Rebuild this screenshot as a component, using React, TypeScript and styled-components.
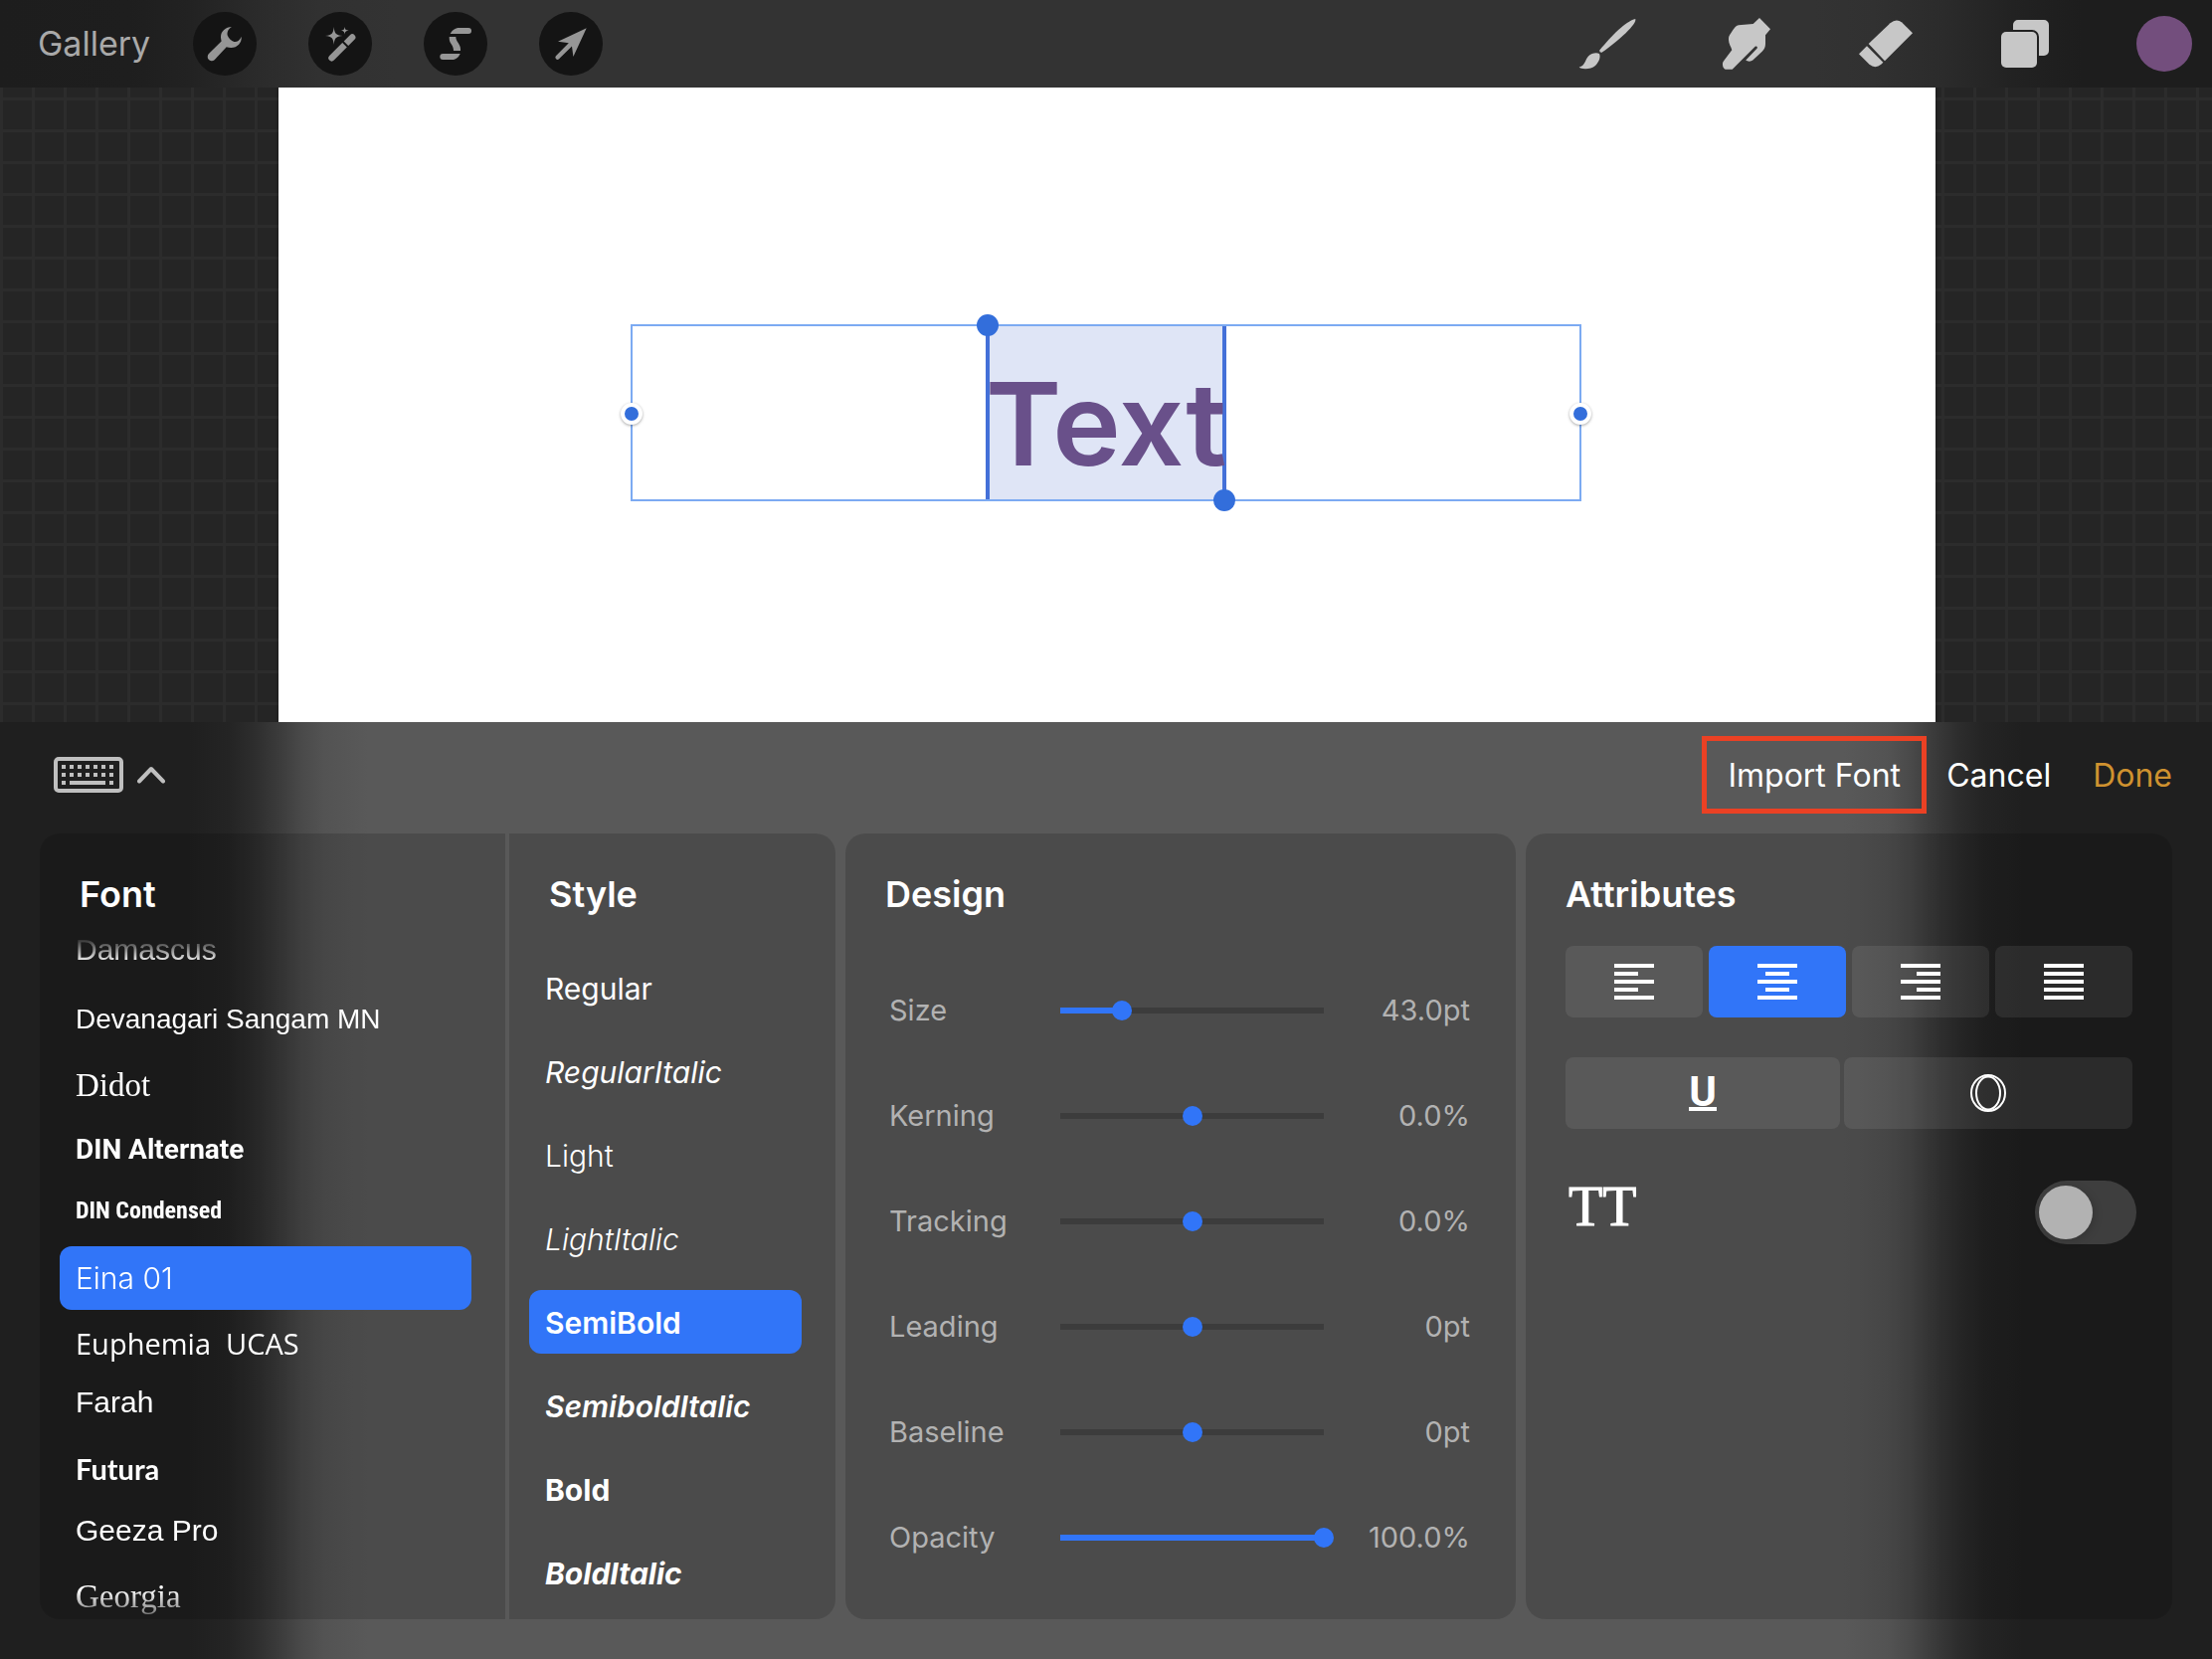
import React, { useState } from "react";
import styled, { createGlobalStyle } from "styled-components";

const ui = `Inter, Roboto, "Liberation Sans", sans-serif`;
const blue = "#3175f8";

const GlobalStyle = createGlobalStyle`
  *, *::before, *::after { box-sizing: border-box; }
  body { margin: 0; background: #1f1f1f; font-family: ${ui}; color: #fff; }
  button { margin: 0; padding: 0; border: 0; background: none; color: inherit; font: inherit; cursor: pointer; }
  ul { margin: 0; padding: 0; list-style: none; }
`;

const Page = styled.div`
  display: flex;
  flex-direction: column;
  min-height: 100vh;
`;

/* ---------- top bar ---------- */

const TopBar = styled.header`
  display: flex;
  align-items: center;
  justify-content: space-between;
  height: 88px;
  padding: 0 18px 0 38px;
  background: linear-gradient(
    90deg,
    #1d1d1d 0, #1e1e1e 130px, #222 190px, #2b2b2b 260px, #313131 320px, #333 400px,
    #333 calc(100% - 400px), #313131 calc(100% - 340px), #2b2b2b calc(100% - 270px),
    #222 calc(100% - 200px), #1d1d1d calc(100% - 130px), #1d1d1d 100%
  );
`;

const ToolGroup = styled.nav<{ $gap: number }>`
  display: flex;
  align-items: center;
  gap: ${(p) => p.$gap}px;
`;

const GalleryButton = styled.button`
  width: 104px;
  font-size: 34px;
  line-height: 44px;
  text-align: left;
  color: #a9a9a9;
`;

const RoundTool = styled.button`
  display: flex;
  width: 64px;
  height: 64px;
  border-radius: 50%;
  background: #141414;
  color: #969696;
`;

const PaintTool = styled.button`
  display: flex;
  justify-content: center;
  width: 60px;
  height: 56px;
  color: #c7c7c7;
`;

const ColorDisc = styled.span`
  width: 56px;
  height: 56px;
  border-radius: 50%;
  background: #734e7d;
`;

const WrenchIcon = () => (
  <svg width="64" height="64" viewBox="0 0 64 64" fill="currentColor" aria-hidden="true">
    <path d="M39 15C33 15 28 19.500 28 25C28 27 28.600 28.600 28.600 29.400L16.200 41.800A4.100 4.100 0 0 0 21.600 48.200L33.700 35.200C42.500 38 49.400 32.500 48.700 24.700C47.200 28.500 44.200 30.600 41.400 30C38.500 29 35.600 26.200 34.700 23.400C34 20.500 35.500 17 39 15Z" />
  </svg>
);

const WandIcon = () => (
  <svg width="64" height="64" viewBox="0 0 64 64" fill="currentColor" aria-hidden="true">
    <path d="M25.700 15C26.300 21.500 27.500 23.300 34.500 24.100C27.500 24.900 26.300 26.500 25.700 33C25.100 26.500 23.900 24.900 17 24.100C23.900 23.300 25.100 21.500 25.700 15Z" />
    <path d="M36.600 14.800C36.900 17.600 37.600 18.400 40.600 18.700C37.600 19 36.900 19.900 36.600 22.700C36.300 19.900 35.600 19 32.600 18.700C35.600 18.400 36.300 17.600 36.600 14.800Z" />
    <path d="M23.500 46.300L44.200 25.500" stroke="currentColor" strokeWidth="6.400" strokeLinecap="round" />
    <path d="M34.500 29.800L40.500 35.800" stroke="#141414" strokeWidth="2" />
  </svg>
);

const SelectIcon = () => (
  <svg width="64" height="64" viewBox="0 0 64 64" fill="currentColor" aria-hidden="true">
    <path d="M26.700 22C28.500 18.500 31.500 16 35.700 16H45A3 3 0 0 1 45 22Z" />
    <path d="M25.700 25H32.300C32.300 30 37 32 37 37.500V39H30C30 33 25.700 32 25.700 26.500Z" />
    <path d="M19.300 42H36.700C35 45.500 32.500 48 28.700 48H19.300A3 3 0 0 1 19.300 42Z" />
  </svg>
);

const ArrowIcon = () => (
  <svg width="64" height="64" viewBox="0 0 64 64" fill="currentColor" aria-hidden="true">
    <path d="M47.700 16.300L34.400 45L33 34.400L20 47.300A2.200 2.200 0 0 1 16.900 44.200L29.800 31.200L19 29.800Z" />
  </svg>
);

const BrushIcon = () => (
  <svg width="60" height="56" viewBox="0 0 60 56" fill="currentColor" aria-hidden="true">
    <path d="M58.300 3C60 8 42 24.500 24.500 36.800Q22 37 22.200 34.600C34 20 49 5 58.300 3Z" />
    <path d="M1.700 51.600C8 50 7.500 44 11 40.500C14 37.500 19 36.600 22 38C23.500 41 22 46 18 50C13.500 54.300 3.500 53.800 1.700 51.600Z" />
  </svg>
);

const SmudgeIcon = () => (
  <svg width="60" height="56" viewBox="0 0 60 56" fill="currentColor" aria-hidden="true">
    <path d="M43 2L54 13.300L49 19.300V28C49 31 48 33.500 45.700 35.700L36.300 44.600C34.500 46 31 46 29.300 44.500L40.500 32.800C41.700 31.300 40 29.700 38.400 31L15.700 53.700H8.700C6.500 53 5 48.500 6.700 45.700L15.300 34.300C14.500 31 12 28 12 24C12 21.500 12.200 20.300 13.300 18.700C15.500 15.500 17 13 19 10.800Q20.500 9.200 22 9.200L36.700 8Z" />
  </svg>
);

const EraserIcon = () => (
  <svg width="60" height="56" viewBox="0 0 60 56" fill="currentColor" aria-hidden="true">
    <path d="M12.700 28L34.500 7.200Q40.700 2.200 46.200 6.600L57 17.300L29 45.300Z" />
    <path d="M11 30.300L3 38.300L13.500 48.800Q19.500 53.500 25.300 48.700L27.400 46.700Z" />
  </svg>
);

const LayersIcon = () => (
  <svg width="60" height="56" viewBox="0 0 60 56" fill="currentColor" aria-hidden="true">
    <path d="M18 14V9A5 5 0 0 1 23 4H49A5 5 0 0 1 54 9V35A5 5 0 0 1 49 40H44V21A7 7 0 0 0 37 14Z" />
    <rect x="6" y="16" width="36" height="36" rx="5" />
  </svg>
);

/* ---------- canvas ---------- */

const Stage = styled.main`
  flex: 1;
  display: flex;
  padding: 0 278px 0 280px;
  background-color: #252525;
  background-image: linear-gradient(#2c2c2c 3px, transparent 3px), linear-gradient(90deg, #2c2c2c 3px, transparent 3px);
  background-size: 32px 32px;
  background-position: 0 10px;
  overflow: hidden;
`;

const Artboard = styled.div`
  flex: 1;
  display: flex;
  align-items: center;
  justify-content: center;
  padding: 16px 2px 0 0;
  background: #fff;
  box-shadow: 0 0 3px #151515;
`;

const TextFrame = styled.div`
  position: relative;
  display: flex;
  justify-content: center;
  width: 956px;
  height: 178px;
  border: 2px solid #7caaf2;
`;

const Selection = styled.div`
  position: relative;
  display: flex;
  align-items: center;
  justify-content: center;
  width: 242px;
  padding-top: 22px;
  border: solid #4470d8;
  border-width: 0 4px;
  background: #dfe5f6;
  color: #69508a;
  font-size: 116px;
  font-weight: 600;
  line-height: 134px;
`;

const Caret = styled.span<{ $end?: boolean }>`
  position: absolute;
  width: 22px;
  height: 22px;
  border-radius: 50%;
  background: #336edb;
  ${(p) => (p.$end ? "right: -13px; bottom: -12px;" : "left: -13px; top: -12px;")}
`;

const SideHandle = styled.span<{ $end?: boolean }>`
  position: absolute;
  top: 77px;
  ${(p) => (p.$end ? "right: -12px;" : "left: -12px;")}
  width: 22px;
  height: 22px;
  border: 4px solid #fff;
  border-radius: 50%;
  background: #336edb;
  box-shadow: 0 1px 3px rgba(0, 0, 0, 0.35);
`;

/* ---------- text panel ---------- */

const Panel = styled.section`
  padding: 0 40px 40px;
  background: linear-gradient(
    90deg,
    #1f1f1f 0, #1f1f1f 190px, #242424 230px, #2d2d2d 255px, #3c3c3c 282px, #4a4a4a 304px, #535353 326px, #595959 370px,
    #595959 calc(100% - 370px), #535353 calc(100% - 326px), #4a4a4a calc(100% - 304px), #3c3c3c calc(100% - 282px),
    #2d2d2d calc(100% - 255px), #242424 calc(100% - 230px), #1f1f1f calc(100% - 190px), #1f1f1f 100%
  );
`;

const PanelBar = styled.div`
  display: flex;
  align-items: center;
  justify-content: space-between;
  height: 112px;
  padding: 0 0 6px 14px;
`;

const KeyboardButton = styled.button`
  display: flex;
  align-items: center;
  gap: 14px;
  color: #bfbfbf;
`;

const PanelActions = styled.div`
  display: flex;
  align-items: center;
`;

const ActionButton = styled.button<{ $accent?: boolean }>`
  margin-left: 42px;
  padding-top: 2px;
  font-size: 32px;
  line-height: 44px;
  color: ${(p) => (p.$accent ? "#cf922f" : "#fff")};
`;

const ImportButton = styled.button`
  width: 226px;
  height: 78px;
  margin-right: -22px;
  padding-top: 2px;
  border: 5px solid #eb4124;
  font-size: 32px;
  line-height: 44px;
`;

const KeyboardIcon = () => (
  <svg width="70" height="36" viewBox="0 0 70 36" fill="currentColor" aria-hidden="true">
    <rect x="2" y="2" width="66" height="32" rx="3" fill="none" stroke="currentColor" strokeWidth="4" />
    {[0, 1, 2, 3, 4, 5, 6].map((i) => (
      <React.Fragment key={i}>
        <rect x={8 + i * 8} y="8" width="4" height="4" />
        <rect x={8 + i * 8} y="16" width="4" height="4" />
      </React.Fragment>
    ))}
    <rect x="8" y="24" width="4" height="4" />
    <rect x="16" y="24" width="36" height="4" />
    <rect x="56" y="24" width="4" height="4" />
  </svg>
);

const ChevronIcon = () => (
  <svg width="28" height="18" viewBox="0 0 28 18" fill="none" stroke="currentColor" strokeWidth="4" strokeLinecap="round" strokeLinejoin="round" aria-hidden="true">
    <path d="M2 15.500L14 3L26 15.500" />
  </svg>
);

const Cards = styled.div`
  display: grid;
  grid-template-columns: 800fr 674fr 650fr;
  gap: 10px;
`;

const SplitCard = styled.div`
  display: grid;
  grid-template-columns: 468fr 328fr;
  gap: 4px;
  border-radius: 20px;
  overflow: hidden;
`;

const Pane = styled.section<{ $pad: string }>`
  display: flex;
  flex-direction: column;
  min-width: 0;
  height: 790px;
  padding: ${(p) => p.$pad};
  background: rgba(0, 0, 0, 0.15);
`;

const Card = styled(Pane)`
  border-radius: 20px;
`;

const Heading = styled.h2<{ $inset?: number }>`
  height: 100px;
  margin: 0;
  padding: 38px 0 0 ${(p) => p.$inset ?? 0}px;
  font-size: 36px;
  font-weight: 600;
  line-height: 46px;
`;

const FontScroller = styled.div`
  flex: 1;
  overflow: hidden;
  mask-image: linear-gradient(transparent 4px, #000 30px, #000 660px, transparent 704px);
`;

const FontItems = styled.ul`
  margin-top: -27px;
`;

const FontButton = styled.button<{ $height: number; $family: string; $size: number; $weight: number; $active: boolean }>`
  display: flex;
  align-items: center;
  width: 100%;
  height: ${(p) => p.$height}px;
  padding: 0 16px;
  border-radius: 12px;
  background: ${(p) => (p.$active ? blue : "transparent")};
  font-family: ${(p) => p.$family};
  font-size: ${(p) => p.$size}px;
  font-weight: ${(p) => p.$weight};
  line-height: 36px;
  white-space: pre;
`;

const StyleItems = styled.ul`
  display: grid;
  gap: 20px;
  padding-top: 23px;
`;

const StyleButton = styled.button<{ $weight: number; $italic: boolean; $active: boolean }>`
  display: flex;
  align-items: center;
  width: 100%;
  height: 64px;
  padding: 2px 16px 0;
  border-radius: 12px;
  background: ${(p) => (p.$active ? blue : "transparent")};
  font-size: 30px;
  font-weight: ${(p) => p.$weight};
  font-style: ${(p) => (p.$italic ? "italic" : "normal")};
  line-height: 36px;
`;

const DesignRows = styled.div`
  display: grid;
  grid-auto-rows: 106px;
  align-items: center;
  padding: 25px 0 0 4px;
`;

const DesignRow = styled.div`
  display: grid;
  grid-template-columns: 162px minmax(0, 284fr) 136fr;
  align-items: center;
  color: #b2b2b2;
  font-size: 29px;
  line-height: 36px;
`;

const ValueText = styled.output`
  text-align: right;
`;

const Slider = styled.input<{ $fill: number }>`
  appearance: none;
  width: 100%;
  height: 20px;
  margin: 0;
  background: none;
  cursor: pointer;

  &::-webkit-slider-runnable-track {
    height: 6px;
    background:
      linear-gradient(${blue}, ${blue}) 10px 0 / calc((100% - 20px) * ${(p) => p.$fill}) 100% no-repeat,
      linear-gradient(#3c3c3c, #3c3c3c) 10px 0 / calc(100% - 20px) 100% no-repeat;
  }

  &::-webkit-slider-thumb {
    appearance: none;
    width: 20px;
    height: 20px;
    margin-top: -7px;
    border-radius: 50%;
    background: ${blue};
  }
`;

const Segments = styled.div<{ $columns: string; $gap: number }>`
  display: grid;
  grid-template-columns: ${(p) => p.$columns};
  gap: ${(p) => p.$gap}px;
  margin: 13px 4px 27px 0;
`;

const SegmentButton = styled.button<{ $active: boolean }>`
  display: flex;
  align-items: center;
  justify-content: center;
  height: 72px;
  border-radius: 8px;
  background: ${(p) => (p.$active ? blue : "rgba(255, 255, 255, 0.08)")};
`;

const UnderlineGlyph = styled.span`
  height: 36px;
  border-bottom: 4px solid #fff;
  font-family: Roboto, ${ui};
  font-size: 42px;
  font-weight: 700;
  line-height: 34px;
`;

const OutlineIcon = () => (
  <svg width="38" height="40" viewBox="0 0 38 40" fill="none" stroke="#fff" strokeWidth="2" aria-hidden="true">
    <ellipse cx="19" cy="20" rx="17" ry="18" />
    <ellipse cx="19" cy="20" rx="12" ry="16.500" />
  </svg>
);

const shortLineX: Record<string, number> = { left: 0, center: 8, right: 16, justify: 0 };

const AlignIcon = ({ kind }: { kind: string }) => (
  <svg width="40" height="36" viewBox="0 0 40 36" fill="#fff" aria-hidden="true">
    {[0, 16, 32].map((y) => (
      <rect key={y} x="0" y={y} width="40" height="4" />
    ))}
    {[8, 24].map((y) => (
      <rect key={y} x={shortLineX[kind]} y={y} width={kind === "justify" ? 40 : 24} height="4" />
    ))}
  </svg>
);

const CapsRow = styled.div`
  display: flex;
  align-items: center;
  justify-content: space-between;
  height: 64px;
  margin-top: 25px;
  padding-left: 3px;
`;

const CapsLabel = styled.label`
  padding-bottom: 12px;
  font-family: "Liberation Serif", serif;
  font-size: 56px;
  line-height: 56px;
  -webkit-text-stroke: 1px #fff;
`;

const Switch = styled.input`
  appearance: none;
  width: 102px;
  height: 64px;
  margin: 0;
  padding: 5px 4px;
  border-radius: 32px;
  background: rgba(255, 255, 255, 0.16);
  cursor: pointer;

  &::before {
    content: "";
    display: block;
    width: 54px;
    height: 54px;
    border-radius: 50%;
    background: #b2b2b2;
    box-shadow: 2px 2px 8px rgba(0, 0, 0, 0.15);
  }

  &:checked { background: ${blue}; }
  &:checked::before { margin-left: 40px; }
`;

const sans = `"Liberation Sans", Arial, sans-serif`;
const serif = `"Liberation Serif", "Times New Roman", serif`;
const condensed = `"Roboto Condensed", "Open Sans Condensed", "Noto Sans Condensed", Roboto, sans-serif`;

const fonts = [
  { name: "Damascus", family: sans, size: 30, weight: 400, height: 88 },
  { name: "Devanagari Sangam MN", family: sans, size: 28, weight: 400, height: 52 },
  { name: "Didot", family: serif, size: 33, weight: 400, height: 80 },
  { name: "DIN Alternate", family: `Roboto, ${sans}`, size: 28, weight: 700, height: 50 },
  { name: "DIN Condensed", family: condensed, size: 24, weight: 700, height: 72 },
  { name: "Eina 01", family: ui, size: 30, weight: 300, height: 64 },
  { name: "Euphemia  UCAS", family: `"Open Sans", ${sans}`, size: 29, weight: 400, height: 68 },
  { name: "Farah", family: sans, size: 30, weight: 400, height: 50 },
  { name: "Futura", family: `Lato, ${sans}`, size: 29, weight: 700, height: 84 },
  { name: "Geeza Pro", family: sans, size: 30, weight: 400, height: 40 },
  { name: "Georgia", family: serif, size: 33, weight: 400, height: 92 },
];

const styles = [
  { name: "Regular", weight: 400, italic: false },
  { name: "RegularItalic", weight: 400, italic: true },
  { name: "Light", weight: 300, italic: false },
  { name: "LightItalic", weight: 300, italic: true },
  { name: "SemiBold", weight: 600, italic: false },
  { name: "SemiboldItalic", weight: 600, italic: true },
  { name: "Bold", weight: 700, italic: false },
  { name: "BoldItalic", weight: 700, italic: true },
];

const settings = [
  { name: "Size", min: 0, max: 183, start: 43, format: (v: number) => `${v.toFixed(1)}pt` },
  { name: "Kerning", min: -100, max: 100, start: 0, format: (v: number) => `${v.toFixed(1)}%` },
  { name: "Tracking", min: -100, max: 100, start: 0, format: (v: number) => `${v.toFixed(1)}%` },
  { name: "Leading", min: -100, max: 100, start: 0, format: (v: number) => `${v}pt` },
  { name: "Baseline", min: -100, max: 100, start: 0, format: (v: number) => `${v}pt` },
  { name: "Opacity", min: 0, max: 100, start: 100, format: (v: number) => `${v.toFixed(1)}%` },
];

const DesignSetting = ({ name, min, max, start, format }: (typeof settings)[number]) => {
  const [value, setValue] = useState(start);
  const id = `setting-${name.toLowerCase()}`;
  return (
    <DesignRow>
      <label htmlFor={id}>{name}</label>
      <Slider
        id={id}
        type="range"
        min={min}
        max={max}
        value={value}
        $fill={min < 0 ? 0 : value / max}
        onChange={(e) => setValue(Number(e.target.value))}
      />
      <ValueText htmlFor={id}>{format(value)}</ValueText>
    </DesignRow>
  );
};

export default function App() {
  const [font, setFont] = useState("Eina 01");
  const [style, setStyle] = useState("SemiBold");
  const [align, setAlign] = useState("center");
  const [underline, setUnderline] = useState(false);
  const [outline, setOutline] = useState(false);

  return (
    <Page>
      <GlobalStyle />
      <TopBar>
        <ToolGroup $gap={52} aria-label="Editing">
          <GalleryButton>Gallery</GalleryButton>
          <RoundTool aria-label="Actions"><WrenchIcon /></RoundTool>
          <RoundTool aria-label="Adjustments"><WandIcon /></RoundTool>
          <RoundTool aria-label="Selection"><SelectIcon /></RoundTool>
          <RoundTool aria-label="Transform"><ArrowIcon /></RoundTool>
        </ToolGroup>
        <ToolGroup $gap={80} aria-label="Painting">
          <PaintTool aria-label="Brush"><BrushIcon /></PaintTool>
          <PaintTool aria-label="Smudge"><SmudgeIcon /></PaintTool>
          <PaintTool aria-label="Erase"><EraserIcon /></PaintTool>
          <PaintTool aria-label="Layers"><LayersIcon /></PaintTool>
          <PaintTool aria-label="Color"><ColorDisc /></PaintTool>
        </ToolGroup>
      </TopBar>

      <Stage>
        <Artboard>
          <TextFrame>
            <Selection>
              Text
              <Caret />
              <Caret $end />
            </Selection>
            <SideHandle />
            <SideHandle $end />
          </TextFrame>
        </Artboard>
      </Stage>

      <Panel>
        <PanelBar>
          <KeyboardButton aria-label="Show keyboard">
            <KeyboardIcon />
            <ChevronIcon />
          </KeyboardButton>
          <PanelActions>
            <ImportButton>Import Font</ImportButton>
            <ActionButton>Cancel</ActionButton>
            <ActionButton $accent>Done</ActionButton>
          </PanelActions>
        </PanelBar>

        <Cards>
          <SplitCard>
            <Pane $pad="0 34px 0 20px">
              <Heading $inset={20}>Font</Heading>
              <FontScroller>
                <FontItems>
                  {fonts.map((f) => (
                    <li key={f.name}>
                      <FontButton
                        $height={f.height}
                        $family={f.family}
                        $size={f.size}
                        $weight={f.weight}
                        $active={f.name === font}
                        aria-pressed={f.name === font}
                        onClick={() => setFont(f.name)}
                      >
                        {f.name}
                      </FontButton>
                    </li>
                  ))}
                </FontItems>
              </FontScroller>
            </Pane>
            <Pane $pad="0 34px 0 20px">
              <Heading $inset={20}>Style</Heading>
              <StyleItems>
                {styles.map((s) => (
                  <li key={s.name}>
                    <StyleButton
                      $weight={s.weight}
                      $italic={s.italic}
                      $active={s.name === style}
                      aria-pressed={s.name === style}
                      onClick={() => setStyle(s.name)}
                    >
                      {s.name}
                    </StyleButton>
                  </li>
                ))}
              </StyleItems>
            </Pane>
          </SplitCard>

          <Card $pad="0 46px 0 40px">
            <Heading>Design</Heading>
            <DesignRows>
              {settings.map((s) => (
                <DesignSetting key={s.name} {...s} />
              ))}
            </DesignRows>
          </Card>

          <Card $pad="0 36px 0 40px">
            <Heading>Attributes</Heading>
            <Segments $columns="repeat(4, 1fr)" $gap={6}>
              {["left", "center", "right", "justify"].map((kind) => (
                <SegmentButton
                  key={kind}
                  $active={kind === align}
                  aria-label={`Align ${kind}`}
                  aria-pressed={kind === align}
                  onClick={() => setAlign(kind)}
                >
                  <AlignIcon kind={kind} />
                </SegmentButton>
              ))}
            </Segments>
            <Segments $columns="276fr 290fr" $gap={4}>
              <SegmentButton $active={underline} aria-label="Underline" aria-pressed={underline} onClick={() => setUnderline(!underline)}>
                <UnderlineGlyph>U</UnderlineGlyph>
              </SegmentButton>
              <SegmentButton $active={outline} aria-label="Outline" aria-pressed={outline} onClick={() => setOutline(!outline)}>
                <OutlineIcon />
              </SegmentButton>
            </Segments>
            <CapsRow>
              <CapsLabel htmlFor="all-caps">TT</CapsLabel>
              <Switch id="all-caps" type="checkbox" />
            </CapsRow>
          </Card>
        </Cards>
      </Panel>
    </Page>
  );
}
